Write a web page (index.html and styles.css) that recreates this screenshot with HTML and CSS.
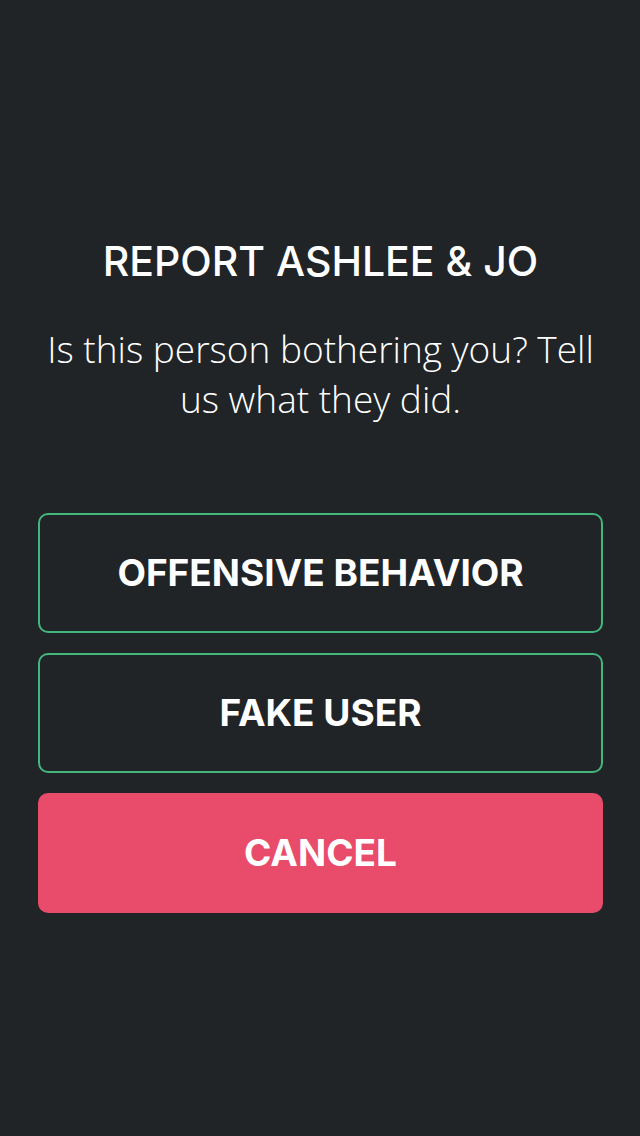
FILE: index.html
```html
<!DOCTYPE html>
<html lang="en">
<head>
<meta charset="utf-8">
<meta name="viewport" content="width=device-width, initial-scale=1">
<title>Report</title>
<link rel="stylesheet" href="styles.css">
</head>
<body>
<main class="report">
  <h1 class="title">REPORT ASHLEE &amp; JO</h1>
  <p class="message">Is this person bothering you? Tell us what they did.</p>
  <div class="actions">
    <button class="button" type="button">OFFENSIVE BEHAVIOR</button>
    <button class="button" type="button">FAKE USER</button>
    <button class="button button-cancel" type="button">CANCEL</button>
  </div>
</main>
</body>
</html>
```
FILE: styles.css
```css
* {
  box-sizing: border-box;
}

body {
  margin: 0;
  background: #202427;
  color: #fff;
  font-family: Inter, "Open Sans", sans-serif;
}

.report {
  min-height: 100vh;
  padding: 14px 37px 0 38px;
  display: flex;
  flex-direction: column;
  justify-content: center;
  text-align: center;
}

.title {
  margin: 0;
  font-size: 41px;
  line-height: 48px;
  font-weight: 500;
}

.message {
  margin: 39px 0 89px;
  font-family: "Open Sans", sans-serif;
  font-size: 37px;
  line-height: 50px;
  font-weight: 300;
}

.actions {
  display: grid;
  gap: 20px;
}

.button {
  min-height: 120px;
  padding: 16px;
  border: 2px solid #42b67c;
  border-radius: 10px;
  background: transparent;
  color: #fff;
  font-family: inherit;
  font-size: 37px;
  line-height: 48px;
  font-weight: 700;
}

.button-cancel {
  border-color: #e94b6b;
  background: #e94b6b;
}
```
